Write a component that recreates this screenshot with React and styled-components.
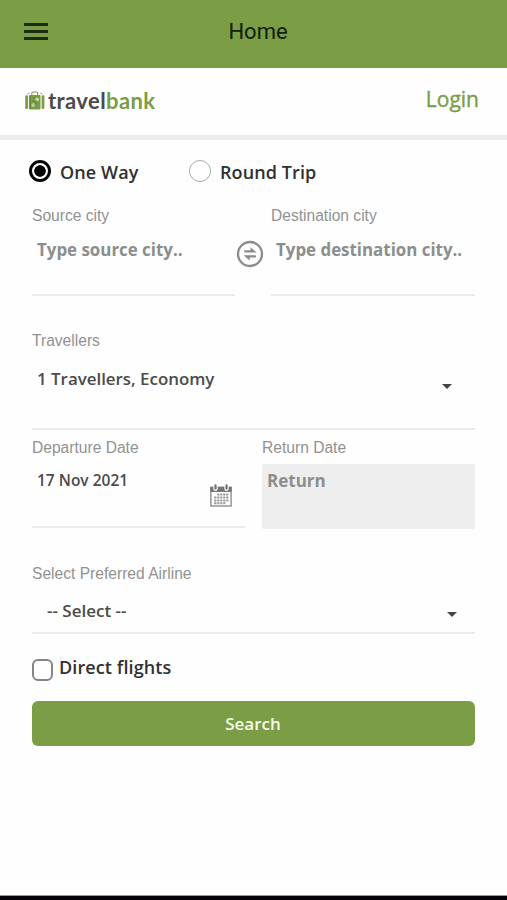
import { useState } from 'react';
import styled, { createGlobalStyle } from 'styled-components';

const GREEN = '#7b9d46';
const LINE = '#ebebeb';

export default function App() {
  const [trip, setTrip] = useState('oneway');
  const [direct, setDirect] = useState(false);

  return (
    <Screen>
      <GlobalStyle />
      <TopBar>
        <MenuButton aria-label="Menu">
          <span />
          <span />
          <span />
        </MenuButton>
        <PageTitle>Home</PageTitle>
      </TopBar>
      <BrandBar>
        <Brand>
          <SuitcaseIcon />
          <BrandName>
            travel<b>bank</b>
          </BrandName>
        </Brand>
        <LoginLink>Login</LoginLink>
      </BrandBar>
      <Form onSubmit={(e) => e.preventDefault()}>
        <TripRow>
          <TripOption $width={160} onClick={() => setTrip('oneway')}>
            <Radio $checked={trip === 'oneway'} />
            <TripLabel>One Way</TripLabel>
          </TripOption>
          <TripOption onClick={() => setTrip('round')}>
            <Radio $checked={trip === 'round'} />
            <TripLabel>Round Trip</TripLabel>
          </TripOption>
        </TripRow>
        <CityRow>
          <Field $height={91}>
            <Label>Source city</Label>
            <Value $top={12} $size={16.9} $placeholder>
              Type source city..
            </Value>
          </Field>
          <SwapCell>
            <SwapIcon />
          </SwapCell>
          <Field $height={91}>
            <Label>Destination city</Label>
            <Value $top={12} $size={16.9} $placeholder>
              Type destination city..
            </Value>
          </Field>
        </CityRow>
        <Field $height={100}>
          <Label>Travellers</Label>
          <Value $top={16} $size={16.9}>
            1 Travellers, Economy
          </Value>
          <Caret $right={23} $bottom={39} />
        </Field>
        <DateRow>
          <Field $height={91}>
            <Label>Departure Date</Label>
            <Value $top={10} $size={15.5}>
              17 Nov 2021
            </Value>
            <CalendarSlot>
              <CalendarIcon />
            </CalendarSlot>
          </Field>
          <ReturnField>
            <Label>Return Date</Label>
            <ReturnBox>Return</ReturnBox>
          </ReturnField>
        </DateRow>
        <Field $height={71}>
          <Label>Select Preferred Airline</Label>
          <Value $top={15} $indent={15}>
            -- Select --
          </Value>
          <Caret $right={18} $bottom={15} />
        </Field>
        <DirectRow onClick={() => setDirect(!direct)}>
          <Checkbox $checked={direct} />
          <DirectLabel>Direct flights</DirectLabel>
        </DirectRow>
        <SearchButton>Search</SearchButton>
      </Form>
      <BottomEdge />
    </Screen>
  );
}

const SuitcaseIcon = () => (
  <svg width="20" height="19" viewBox="0 0 20 19">
    <path d="M6.8 4V2.4Q6.8 1 8.2 1h3.2q1.4 0 1.4 1.4V4" fill="none" stroke={GREEN} strokeWidth="1.1" />
    <path d="M2.6 3.4q.2-1.2 1.8-1.2M17.2 3.4q-.2-1.2-1.8-1.2" fill="none" stroke={GREEN} strokeWidth="1" />
    <rect x="0.2" y="4.2" width="2.8" height="13.8" rx="1.2" fill={GREEN} />
    <rect x="3.9" y="4" width="11.6" height="14.4" rx="0.8" fill={GREEN} />
    <rect x="16.6" y="4.2" width="2.8" height="13.8" rx="1.2" fill={GREEN} />
    <path d="M5.3 5v12.4" stroke="#5f8238" strokeWidth="0.8" />
    <path d="M8.2 7.2h2.2M7.2 10.2h3.6v3.4" fill="none" stroke="#5f8238" strokeWidth="1.2" />
    <circle cx="12" cy="8.6" r="1.8" fill="#dce9cb" />
    <circle cx="8.2" cy="14" r="1.7" fill="#dce9cb" />
    <path d="M10.2 8.7h1.6v1.6M8 12.6v1.6h1.6" fill="none" stroke={GREEN} strokeWidth="0.7" />
  </svg>
);

const SwapIcon = () => (
  <svg width="28" height="28" viewBox="0 0 28 28">
    <circle cx="14" cy="14" r="12" fill="none" stroke="#8b8b8b" strokeWidth="2.3" />
    <path d="M8.3 10.3h6.2V7.2l6.2 5.4H8.3z" fill="#8b8b8b" />
    <path d="M19.9 17.5h-6.2v3.1l-6.2-5.4h12.4z" fill="#8b8b8b" />
  </svg>
);

const CalendarIcon = () => (
  <svg width="22" height="23" viewBox="0 0 22 23">
    <rect x="0.9" y="3.4" width="20.2" height="18.6" fill="#fff" stroke="#858585" strokeWidth="1.3" />
    <rect x="0.5" y="2.8" width="21" height="5.2" fill="#747474" />
    <path d="M5.5 .8v4M16.5 .8v4" stroke="#fff" strokeWidth="4.4" strokeLinecap="round" />
    <path d="M5.5 1.4v3.2M16.5 1.4v3.2" stroke="#747474" strokeWidth="2.3" strokeLinecap="round" />
    <path
      d="M7.2 10.4h11.2M4.2 13.4h14.2M4.2 16.4h14.2M4.2 19.2h11.2"
      stroke="#999"
      strokeWidth="2"
      strokeDasharray="2.2 .8"
    />
  </svg>
);

const GlobalStyle = createGlobalStyle`
  * {
    box-sizing: border-box;
  }
  body {
    margin: 0;
    background: #fefefe;
  }
`;

const Screen = styled.div`
  display: flex;
  flex-direction: column;
  width: 507px;
  height: 900px;
  overflow: hidden;
  background: #fefefe;
  font-family: 'Open Sans', sans-serif;
`;

const TopBar = styled.header`
  display: grid;
  grid-template-columns: 72px 1fr 72px;
  align-items: center;
  height: 68px;
  padding-bottom: 5px;
  flex: none;
  background: ${GREEN};
`;

const MenuButton = styled.button`
  display: flex;
  flex-direction: column;
  gap: 4px;
  width: 24px;
  margin: 0 0 0 24px;
  padding: 0;
  border: 0;
  background: none;
  span {
    height: 3px;
    background: #1b2b12;
  }
`;

const PageTitle = styled.h1`
  margin: 0;
  padding: 1px 0 0 9px;
  text-align: center;
  font: 400 22px/30px Roboto, sans-serif;
  color: #10200a;
`;

const BrandBar = styled.div`
  display: flex;
  justify-content: space-between;
  flex: none;
  height: 72px;
  padding: 0 28px 0 25px;
  border-bottom: 5px solid #ececec;
`;

const Brand = styled.div`
  display: flex;
  align-items: flex-start;
  gap: 3px;
  padding-top: 23px;
`;

const BrandName = styled.div`
  margin-top: -4px;
  font: 700 22px/28px Lato, sans-serif;
  letter-spacing: 0.4px;
  color: #4b4a4d;
  b {
    font-weight: 700;
    color: ${GREEN};
  }
`;

const LoginLink = styled.a`
  padding-top: 16px;
  font: 400 21px/30px 'Open Sans', sans-serif;
  -webkit-text-stroke: 0.4px ${GREEN};
  color: ${GREEN};
`;

const Form = styled.form`
  display: flex;
  flex-direction: column;
  padding: 0 32px;
`;

const TripRow = styled.div`
  display: flex;
  height: 65px;
  margin-left: -3px;
  padding-top: 20px;
`;

const TripOption = styled.div`
  display: flex;
  gap: 9px;
  width: ${(props) => (props.$width ? `${props.$width}px` : 'auto')};
`;

const Radio = styled.span`
  width: 22px;
  height: 22px;
  border: ${(props) => (props.$checked ? '3px solid #050505' : '1px solid #aaa')};
  border-radius: 50%;
  background: ${(props) => (props.$checked ? 'radial-gradient(circle, #050505 5.4px, #fff 6.1px)' : '#fff')};
`;

const TripLabel = styled.span`
  font-size: 18px;
  line-height: 24px;
  font-weight: 600;
  letter-spacing: 0.1px;
  color: #303030;
`;

const CityRow = styled.div`
  display: grid;
  grid-template-columns: 203px 36px 204px;
  margin-bottom: 34px;
`;

const Field = styled.div`
  position: relative;
  height: ${(props) => props.$height}px;
  border-bottom: 2px solid ${LINE};
`;

const Label = styled.div`
  font: 400 15.6px/22px 'Liberation Sans', sans-serif;
  color: #929292;
`;

const Value = styled.div`
  margin-top: ${(props) => props.$top}px;
  padding-left: ${(props) => props.$indent || 5}px;
  font-size: ${(props) => props.$size || 17}px;
  line-height: 22px;
  font-weight: ${(props) => (props.$placeholder ? 700 : 600)};
  white-space: nowrap;
  color: ${(props) => (props.$placeholder ? '#8c8e8d' : '#4b4b4b')};
`;

const SwapCell = styled.div`
  padding: 35px 0 0 1px;
`;

// sits over the right end of its field
const Caret = styled.i`
  position: absolute;
  right: ${(props) => props.$right}px;
  bottom: ${(props) => props.$bottom}px;
  border: 5px solid transparent;
  border-top-color: #444;
  border-bottom-width: 0;
`;

const DateRow = styled.div`
  display: grid;
  grid-template-columns: 213px 213px;
  gap: 17px;
  margin: 7px 0 33px;
`;

const CalendarSlot = styled.div`
  position: absolute;
  right: 13px;
  bottom: 19px;
  line-height: 0;
`;

const ReturnField = styled.div`
  height: 93px;
`;

const ReturnBox = styled.div`
  height: 65px;
  margin-top: 5px;
  padding: 6px 5px;
  border-radius: 2px;
  background: #eee;
  font-size: 17px;
  line-height: 22px;
  font-weight: 700;
  color: #8c8e8d;
`;

const DirectRow = styled.div`
  display: flex;
  align-items: flex-start;
  gap: 7px;
  height: 67px;
  padding-top: 25px;
`;

const Checkbox = styled.span`
  width: 21px;
  height: 22px;
  border: 2px solid #858585;
  border-radius: 6px;
  background: ${(props) => (props.$checked ? GREEN : '#fff')};
`;

const DirectLabel = styled.span`
  margin-top: -4px;
  margin-left: -1px;
  font-size: 18px;
  line-height: 24px;
  font-weight: 600;
  letter-spacing: 0.1px;
  color: #303030;
`;

const SearchButton = styled.button`
  height: 45px;
  padding: 0 1px 0 0;
  border: 0;
  border-radius: 6px;
  background: ${GREEN};
  font: 600 17px/24px 'Open Sans', sans-serif;
  color: #f7fbe9;
`;

const BottomEdge = styled.div`
  height: 5px;
  margin-top: auto;
  flex: none;
  border-top: 1px solid #999;
  background: #050308;
`;
